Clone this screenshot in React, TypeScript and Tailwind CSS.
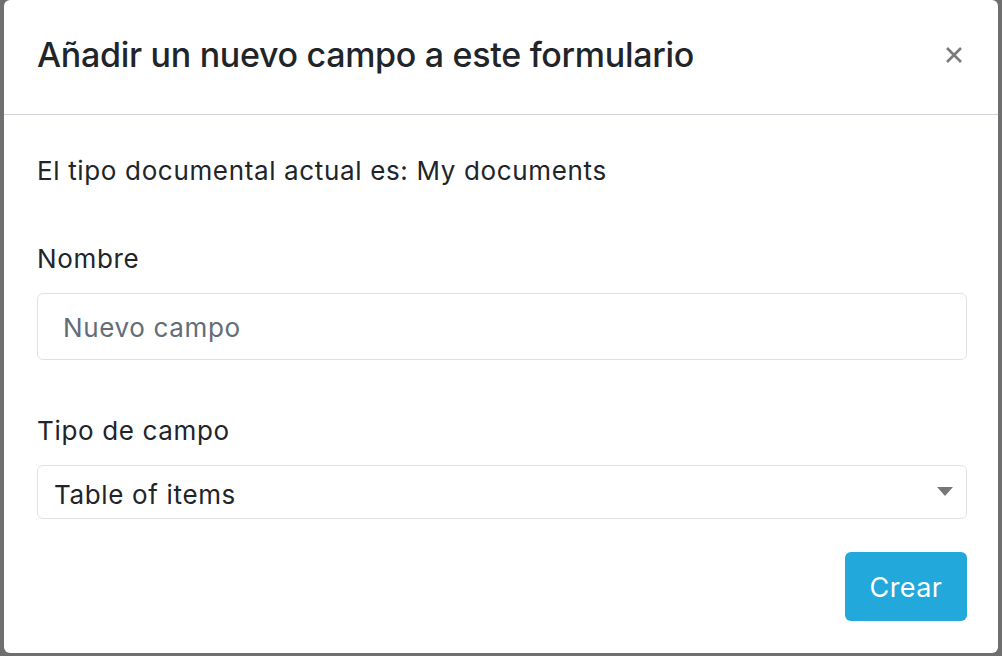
export default function App() {
  return (
    <div
      className="w-[1002px] h-[656px] bg-[#6f6f6f] pl-[4px] pr-[4px] pb-[3px] overflow-hidden"
      style={{ fontFamily: "Inter, 'Liberation Sans', sans-serif" }}
    >
      <div className="h-full bg-white rounded-[6px] flex flex-col text-[#212529]">
        {/* header */}
        <div className="h-[115px] border-b border-[#cfd3d7] flex items-center justify-between pl-[33px] pr-[34px] pb-[4px]">
          <h1 className="text-[34px] leading-[42px] font-medium tracking-[-0.3px]">
            Añadir un nuevo campo a este formulario
          </h1>
          <button className="w-[20px] h-[20px] flex items-center justify-center">
            <svg width="18" height="18" viewBox="0 0 18 18">
              <path d="M2 2 L16 16 M16 2 L2 16" stroke="#7a7a7a" strokeWidth="2.6" strokeLinecap="butt" />
            </svg>
          </button>
        </div>

        {/* body */}
        <div className="flex flex-col pl-[33px] pr-[31px] pt-[38px] pb-[32px] text-[26px] leading-[36px] tracking-[0.65px]">
          <p>El tipo documental actual es: My documents</p>

          <label className="mt-[52px]">Nombre</label>
          <div className="mt-[16px] h-[67px] border border-[#dee2e6] rounded-[6px] flex items-center pl-[25px] pt-[3px] text-[#626d78]">
            Nuevo campo
          </div>

          <label className="mt-[53px]">Tipo de campo</label>
          <div className="mt-[16px] h-[54px] border border-[#dee2e6] rounded-[6px] flex items-center justify-between pl-[16px] pr-[13px]">
            <span className="pt-[5px]">Table of items</span>
            <svg width="16" height="10" viewBox="0 0 16 10">
              <path d="M0 0 H16 L8 9 Z" fill="#777" />
            </svg>
          </div>

          <div className="mt-[33px] flex justify-end">
            <button className="w-[122px] h-[69px] rounded-[6px] bg-[#22a8da] text-white text-[27px] tracking-[0.4px] pt-[3px]">
              Crear
            </button>
          </div>
        </div>
      </div>
    </div>
  );
}
